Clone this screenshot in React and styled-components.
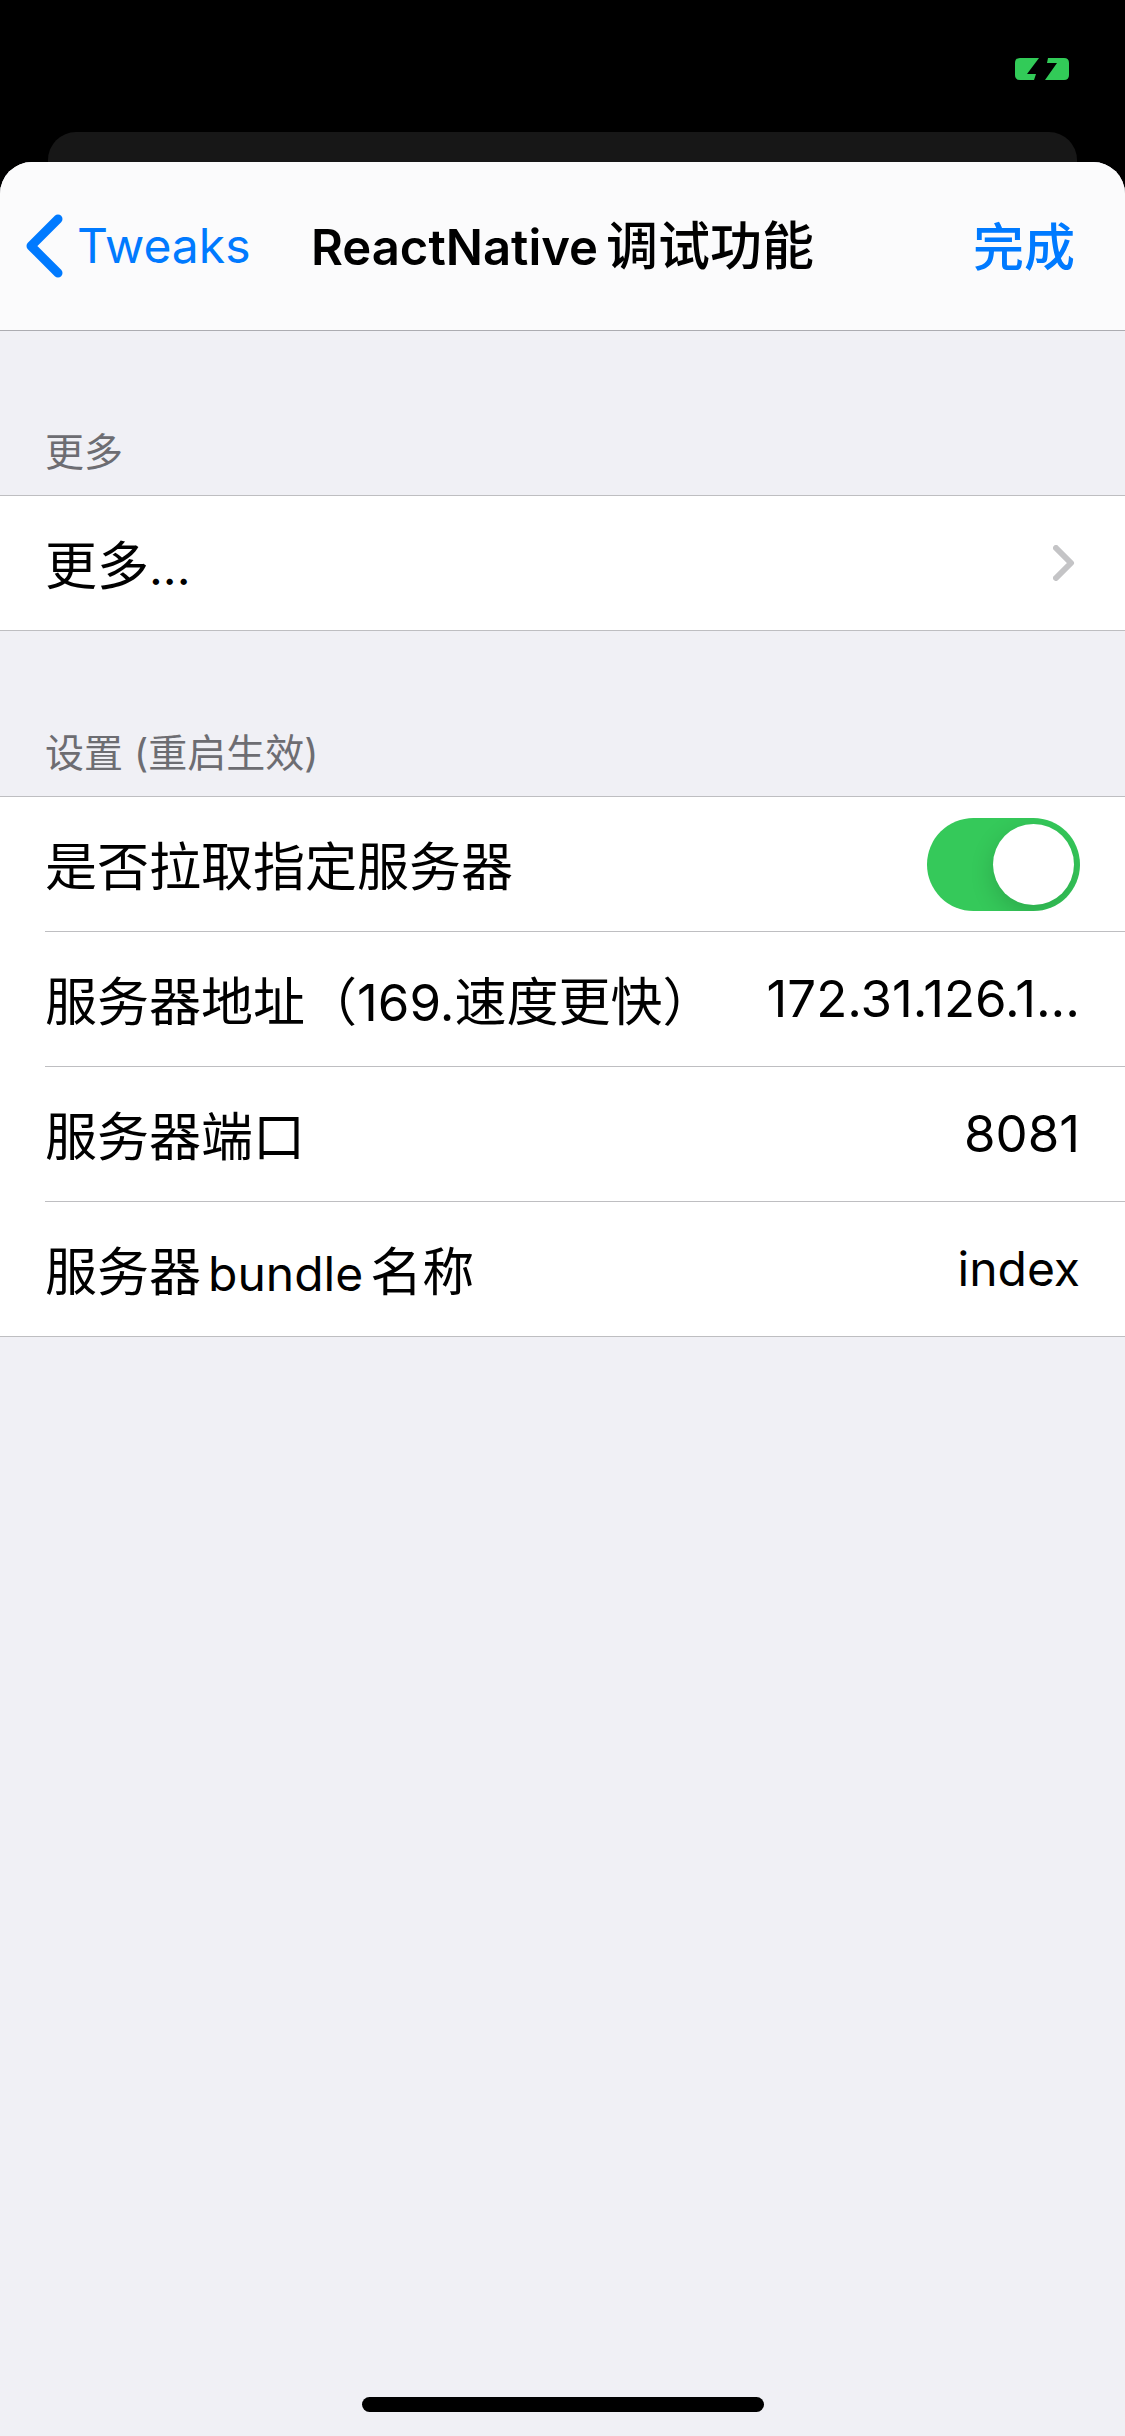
import React, { useState } from "react";
import styled, { createGlobalStyle } from "styled-components";

const GlobalStyle = createGlobalStyle`
  *, *::before, *::after { box-sizing: border-box; }
  body {
    margin: 0;
    background: #000;
    font-family: Inter, "Noto Sans CJK SC", sans-serif;
    color: #000;
  }
  button, input {
    font: inherit;
    color: inherit;
    margin: 0;
    padding: 0;
    border: 0;
    background: none;
  }
`;

const Screen = styled.div`
  min-height: 100vh;
  display: flex;
  flex-direction: column;
  background: #000;
`;

const StatusBar = styled.header`
  height: 132px;
  padding: 58px 56px 0;
  display: flex;
  justify-content: flex-end;
  align-items: flex-start;
`;

const CardBehind = styled.div`
  height: 30px;
  margin: 0 48px;
  border-radius: 28px 28px 0 0;
  background: #171717;
`;

const Sheet = styled.div`
  flex: 1;
  display: flex;
  flex-direction: column;
  overflow: hidden;
  border-radius: 32px 32px 0 0;
  background: #f0f0f5;
`;

const NavBar = styled.nav`
  height: 168px;
  flex-shrink: 0;
  padding: 0 25px;
  display: grid;
  grid-template-columns: 1fr auto 1fr;
  align-items: center;
  background: #fbfbfc;
  box-shadow: 0 1px 0 #acacb1;
`;

const NavButton = styled.button`
  display: flex;
  align-items: center;
  gap: 14px;
  justify-self: ${(p) => (p.$end ? "end" : "start")};
  padding: ${(p) => (p.$end ? "4px 25px 0 0" : "0")};
  color: #007aff;
  font-size: ${(p) => (p.$end ? 51 : 48)}px;
  font-weight: ${(p) => (p.$end ? 500 : 400)};
  line-height: 64px;
  white-space: nowrap;
  cursor: pointer;
`;

const Title = styled.h1`
  margin: 0;
  padding-top: 2px;
  font-size: 52px;
  font-weight: 500;
  line-height: 64px;
  white-space: nowrap;
`;

const TitleLatin = styled.span`
  margin-right: 8px;
  font-size: 49px;
  font-weight: 600;
`;

const Latin = styled.span`
  font-size: ${(p) => (p.$numeric ? 51 : 48)}px;
  margin: 0 ${(p) => (p.$spaced ? 7 : 0)}px;
`;

const Content = styled.main`
  flex: 1;
`;

const SectionTitle = styled.h2`
  margin: 0;
  height: 165px;
  padding: 0 45px 15px;
  display: flex;
  align-items: flex-end;
  font-size: 39px;
  font-weight: 400;
  line-height: 56px;
  color: #6d6d72;
`;

const List = styled.div`
  background: #fff;
  border-top: 1px solid #bebec1;
  border-bottom: 1px solid #bebec1;
`;

const Row = styled.div`
  height: 134px;
  margin-left: 45px;
  padding-right: 45px;
  display: flex;
  align-items: center;
  gap: 40px;

  & + & {
    height: 135px;
    border-top: 1px solid #bebec1;
  }
`;

const LinkRow = styled.button`
  width: 100%;
  height: 134px;
  padding: 0 50px 0 45px;
  display: flex;
  align-items: center;
  justify-content: space-between;
  cursor: pointer;
`;

const rowText = `
  padding-top: 8px;
  font-size: 52px;
  line-height: 64px;
  white-space: nowrap;
`;

const LinkText = styled.span`
  ${rowText}
`;

const Label = styled.label`
  ${rowText}
`;

const ValueInput = styled.input`
  flex: 1;
  min-width: 0;
  font-size: ${(p) => (p.$numeric ? 51 : 48)}px;
  line-height: 64px;
  text-align: right;
  outline: none;
`;

const Switch = styled.input`
  appearance: none;
  flex: none;
  width: 153px;
  height: 93px;
  margin-left: auto;
  padding: 6px;
  border-radius: 47px;
  display: flex;
  justify-content: flex-start;
  overflow: hidden;
  background: #e9e9ea;
  cursor: pointer;

  &::before {
    content: "";
    width: 81px;
    height: 81px;
    border-radius: 50%;
    background: #fff;
    box-shadow: 0 8px 24px rgba(0, 0, 0, 0.16);
  }

  &:checked {
    justify-content: flex-end;
    background: #35c95a;
  }
`;

const HomeBar = styled.footer`
  padding: 24px 0;
  display: flex;
  justify-content: center;

  &::before {
    content: "";
    width: 402px;
    height: 15px;
    border-radius: 8px;
    background: #000;
  }
`;

function Battery() {
  return (
    <svg width="54" height="22" viewBox="0 0 54 22" role="img" aria-label="Charging">
      <path fill="#32cb58" d="M5 0H24L12 16H21L19 22H5Q0 22 0 17V5Q0 0 5 0Z" />
      <path fill="#32cb58" d="M33 0H49Q54 0 54 5V17Q54 22 49 22H30L42 5H32Z" />
    </svg>
  );
}

function BackIcon() {
  return (
    <svg width="38" height="64" viewBox="0 0 38 64" fill="none" aria-hidden="true">
      <path d="M33 5L6 32L33 59" stroke="#007aff" strokeWidth="9" strokeLinecap="round" strokeLinejoin="round" />
    </svg>
  );
}

function Disclosure() {
  return (
    <svg width="22" height="36" viewBox="0 0 22 36" fill="none" aria-hidden="true">
      <path d="M3 3L18 18L3 33" stroke="#c4c4c6" strokeWidth="6" strokeLinecap="round" strokeLinejoin="round" />
    </svg>
  );
}

function TextRow({ id, label, value, numeric }) {
  const [text, setText] = useState(value);
  return (
    <Row>
      <Label htmlFor={id}>{label}</Label>
      <ValueInput
        id={id}
        type="text"
        $numeric={numeric}
        value={text}
        onChange={(e) => setText(e.target.value)}
      />
    </Row>
  );
}

export default function App() {
  const [fetchServer, setFetchServer] = useState(true);
  return (
    <Screen lang="zh-CN">
      <GlobalStyle />
      <StatusBar>
        <Battery />
      </StatusBar>
      <CardBehind />
      <Sheet>
        <NavBar>
          <NavButton type="button">
            <BackIcon />
            Tweaks
          </NavButton>
          <Title>
            <TitleLatin>ReactNative</TitleLatin>调试功能
          </Title>
          <NavButton type="button" $end>
            完成
          </NavButton>
        </NavBar>
        <Content>
          <SectionTitle>更多</SectionTitle>
          <List>
            <LinkRow type="button">
              <LinkText>
                更多<Latin>...</Latin>
              </LinkText>
              <Disclosure />
            </LinkRow>
          </List>
          <SectionTitle>设置 (重启生效)</SectionTitle>
          <List>
            <Row>
              <Label htmlFor="fetch">是否拉取指定服务器</Label>
              <Switch
                id="fetch"
                type="checkbox"
                role="switch"
                checked={fetchServer}
                onChange={(e) => setFetchServer(e.target.checked)}
              />
            </Row>
            <TextRow
              id="host"
              numeric
              label={<>服务器地址（<Latin $numeric>169.</Latin>速度更快）</>}
              value="172.31.126.1..."
            />
            <TextRow id="port" numeric label="服务器端口" value="8081" />
            <TextRow
              id="bundle"
              label={<>服务器<Latin $spaced>bundle</Latin>名称</>}
              value="index"
            />
          </List>
        </Content>
        <HomeBar />
      </Sheet>
    </Screen>
  );
}
